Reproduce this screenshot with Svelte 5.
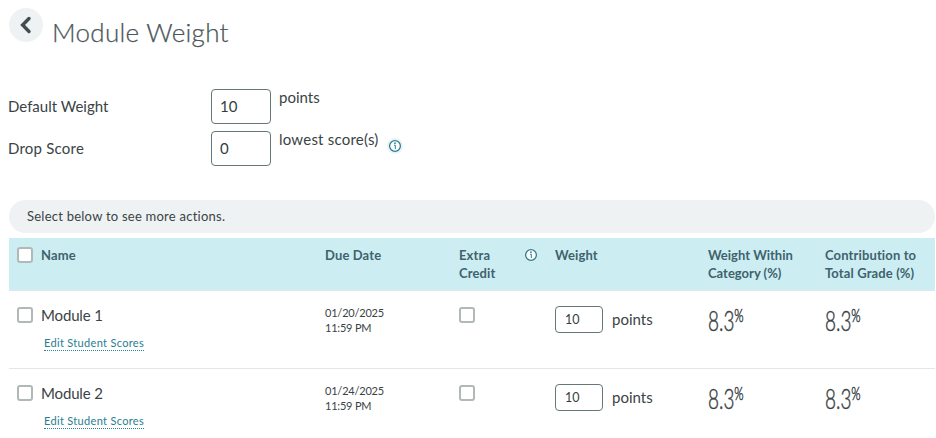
<script lang="ts">
  let defaultWeight = $state("10");
  let dropScore = $state("0");
  let modules = $state([
    { name: "Module 1", date: "01/20/2025", time: "11:59 PM", extra: false, weight: "10", share: "8.3", selected: false },
    { name: "Module 2", date: "01/24/2025", time: "11:59 PM", extra: false, weight: "10", share: "8.3", selected: false },
  ]);
</script>

{#snippet info()}
  <svg class="info" viewBox="0 0 16 16" aria-label="More information">
    <circle class="halo" cx="8" cy="8" r="8" />
    <circle class="ring" cx="8" cy="8" r="5.4" />
    <path d="M7 7.2h1.3v3.9" />
    <circle class="dot" cx="8" cy="5.2" r=".85" />
  </svg>
{/snippet}

<main>
  <header>
    <button class="back" aria-label="Back">
      <svg viewBox="0 0 34 34"><path d="M20 10.5 L13.6 17 L20 23.5" /></svg>
    </button>
    <h1>Module Weight</h1>
  </header>

  <div class="settings">
    <div class="setting">
      <label for="default-weight">Default Weight</label>
      <input id="default-weight" bind:value={defaultWeight} />
      <span class="unit">points</span>
    </div>
    <div class="setting spaced">
      <label for="drop-score">Drop Score</label>
      <input id="drop-score" bind:value={dropScore} />
      <span class="unit">lowest score(s)</span>
      {@render info()}
    </div>
  </div>

  <div class="actions"><span>Select below to see more actions.</span></div>

  <div class="table">
    <div class="row head">
      <div class="name"><input type="checkbox" aria-label="Select all" /><span>Name</span></div>
      <div>Due Date</div>
      <div class="extra"><span>Extra<br />Credit</span>{@render info()}</div>
      <div>Weight</div>
      <div class="within">Weight Within<br />Category (%)</div>
      <div>Contribution to<br />Total Grade (%)</div>
    </div>
    {#each modules as module}
      <div class="row">
        <div class="name">
          <input type="checkbox" bind:checked={module.selected} aria-label={module.name} />
          <div>
            <div class="module-name">{module.name}</div>
            <a href="#scores">Edit Student Scores</a>
          </div>
        </div>
        <div class="due">{module.date}<br />{module.time}</div>
        <div class="credit"><input type="checkbox" bind:checked={module.extra} aria-label="Extra credit" /></div>
        <div class="weight"><input bind:value={module.weight} aria-label="Weight" /><span>points</span></div>
        <div class="percent"><span>{module.share}<sup>%</sup></span></div>
        <div class="percent"><span>{module.share}<sup>%</sup></span></div>
      </div>
    {/each}
  </div>
</main>

<style>
  :global(body) {
    background: #fff;
    overflow: hidden;
  }
  main {
    box-sizing: border-box;
    height: 438px;
    padding: 8px 1px 0 9px;
    overflow: hidden;
    color: #3a4346;
    font-family: Lato, "Open Sans", sans-serif;
    font-variant-ligatures: none;
  }
  input {
    box-sizing: border-box;
    margin: 0;
    border: 1px solid #66777a;
    border-radius: 4px;
    background: #fff;
    color: #343e41;
    font-family: inherit;
  }
  input[type="checkbox"] {
    flex: none;
    appearance: none;
    width: 16px;
    height: 16px;
    border: 2px solid #b0b9b8;
    border-radius: 3px;
  }
  header {
    display: flex;
    height: 80px;
  }
  .back {
    flex: none;
    width: 34px;
    height: 34px;
    padding: 0;
    border: 0;
    border-radius: 50%;
    background: #eff2f2;
  }
  .back svg {
    display: block;
    fill: none;
    stroke: #434c4f;
    stroke-width: 3.4;
    stroke-linecap: round;
  }
  h1 {
    margin: 6px 0 0 9px;
    font-size: 26px;
    line-height: 36px;
    font-weight: 300;
    letter-spacing: 0.3px;
    color: #4c5659;
    -webkit-text-stroke: 0.25px #4c5659;
    white-space: nowrap;
  }
  .settings {
    box-sizing: border-box;
    height: 112px;
    padding-top: 1px;
  }
  .setting {
    display: flex;
    height: 35px;
    margin-bottom: 7px;
    font-size: 15px;
    white-space: nowrap;
  }
  .spaced {
    letter-spacing: 0.22px;
  }
  .setting label {
    width: 203px;
    margin-left: -1px;
    line-height: 34px;
  }
  .setting input {
    width: 60px;
    padding: 0 8px 2px;
    font-size: 15px;
  }
  .unit {
    margin-left: 8px;
    line-height: 17px;
  }
  .info {
    flex: none;
    width: 16px;
    height: 16px;
    fill: none;
    stroke: #2a8192;
  }
  .setting .info {
    margin: 7px 0 0 8px;
  }
  .halo {
    fill: #edf3f3;
    stroke: none;
  }
  .ring {
    fill: #fff;
    stroke-width: 1.3;
  }
  .dot {
    fill: #2a8192;
    stroke: none;
  }
  .actions {
    height: 33px;
    margin-bottom: 5px;
    padding-left: 18px;
    border-radius: 17px;
    background: #eef2f3;
    font-size: 13px;
    line-height: 32px;
    letter-spacing: 0.24px;
  }
  .row {
    display: grid;
    grid-template-columns: 316px 134px 96px 153px 117px 110px;
    box-sizing: border-box;
    height: 78px;
    border-bottom: 1px solid #e1e8e9;
    white-space: nowrap;
  }
  .head {
    height: 53px;
    padding-top: 9px;
    background: #cceef3;
    color: #40626c;
    font-size: 13px;
    line-height: 17.5px;
    font-weight: 700;
    letter-spacing: 0.13px;
  }
  .within {
    letter-spacing: 0;
  }
  .name {
    display: flex;
    align-items: flex-start;
    gap: 8px;
    padding-left: 8px;
  }
  .extra {
    display: flex;
    justify-content: space-between;
    padding-right: 16px;
  }
  .head .halo {
    fill: #d2ebee;
  }
  .row:not(.head) .name > input,
  .credit input {
    margin-top: 16px;
  }
  .module-name {
    margin-top: 14px;
    font-size: 15px;
    line-height: 20px;
    letter-spacing: -0.15px;
  }
  a {
    display: inline-block;
    margin: 11px 0 0 3px;
    border-bottom: 1px dotted #26869a;
    color: #277e91;
    font-size: 11px;
    line-height: 14px;
    letter-spacing: 0.32px;
    text-decoration: none;
  }
  .due {
    padding-top: 14px;
    font-size: 11px;
    line-height: 15px;
    letter-spacing: -0.2px;
  }
  .weight {
    display: flex;
    align-items: flex-start;
    gap: 9px;
    padding-top: 15px;
    font-size: 15px;
    line-height: 27px;
  }
  .weight input {
    width: 48px;
    height: 27px;
    padding: 0 9px 1px;
    font-size: 12.5px;
  }
  .percent {
    padding-top: 14px;
    font-size: 27px;
    line-height: 32px;
    font-weight: 300;
  }
  .percent span {
    display: inline-block;
    transform: scaleX(0.7);
    transform-origin: left;
    -webkit-text-stroke: 0.5px #3a4346;
  }
  sup {
    font-size: 17px;
    line-height: 0;
    vertical-align: 9px;
  }
</style>
